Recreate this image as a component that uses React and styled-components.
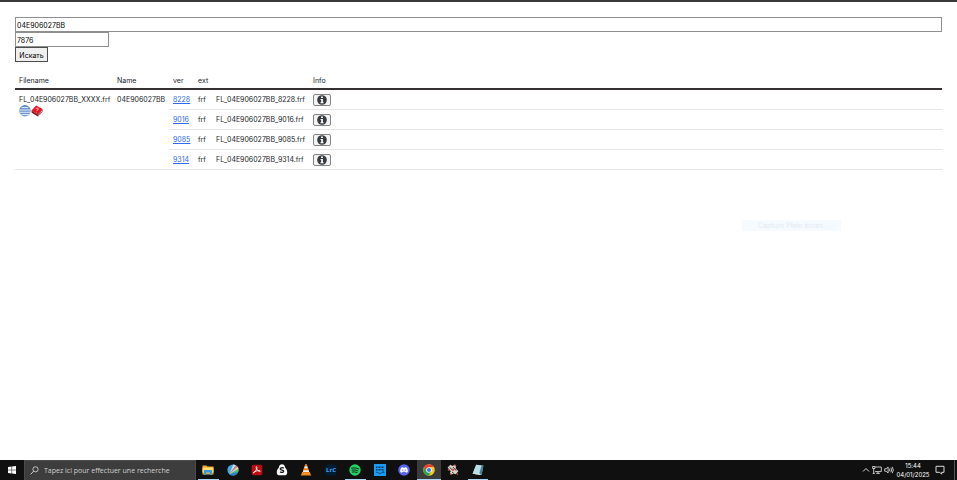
import React from 'react';
import styled, { createGlobalStyle, css } from 'styled-components';

const color = {
  ink: '#212529',
  line: '#e3e6e9',
  link: '#2f6bf0',
  bar: '#101010',
  barActive: '#3b3b3b',
  running: '#a9d6f5',
};

const font = {
  ui: "'Open Sans', 'Noto Sans', sans-serif",
  data: "Inter, 'Open Sans', sans-serif",
};

const GlobalStyle = createGlobalStyle`
  * {
    box-sizing: border-box;
  }
  body {
    margin: 0;
    background: #fff;
    color: ${color.ink};
    font-family: ${font.ui};
    font-size: 7px;
    line-height: 11px;
  }
`;

const Page = styled.div`
  position: relative;
  display: flex;
  flex-direction: column;
  min-height: 100vh;
  border-top: 2px solid #3b3838;
`;

const Content = styled.main`
  flex: 1;
  padding: 15px;
`;

const SearchForm = styled.form`
  display: flex;
  flex-direction: column;
  align-items: flex-start;
`;

const Field = styled.input`
  width: ${props => (props.$wide ? '100%' : '94px')};
  height: 15px;
  padding: 1px 1px 0;
  border: 1px solid #8f8f8f;
  border-radius: 0;
  background: #fff;
  color: #000;
  font: 7px/11px ${font.data};
  outline: none;
`;

const Submit = styled.button`
  width: 33px;
  height: 15px;
  padding: 1px 0 0;
  border: 1px solid #101010;
  outline: 1px solid #4d4d4d;
  outline-offset: -1px;
  border-radius: 0;
  background: #efefef;
  color: #000;
  font: 7px/11px ${font.data};
`;

const Table = styled.table`
  width: 100%;
  margin-top: 9px;
  border-spacing: 0;
  table-layout: fixed;
  font-family: ${font.data};
`;

const HeadCell = styled.th`
  width: ${props => props.$width || 'auto'};
  padding: 4px 4px 2px;
  border-bottom: 2px solid #353032;
  font-weight: 400;
  line-height: 11px;
  text-align: left;
`;

const Cell = styled.td`
  height: 20px;
  padding: 4px 4px 3px;
  border-bottom: 1px solid ${color.line};
  line-height: 11px;
  vertical-align: top;
  white-space: nowrap;
`;

const VersionLink = styled.a`
  color: ${color.link};
`;

const Badges = styled.div`
  display: flex;
  height: 12px;
`;

const InfoButton = styled.button`
  display: flex;
  align-items: center;
  justify-content: center;
  width: 18px;
  height: 12px;
  padding: 0;
  border: 1px solid #858585;
  border-radius: 2px;
  background: #f2f2f2;
`;

const Ghost = styled.div`
  position: absolute;
  top: 218px;
  left: 742px;
  width: 99px;
  height: 11px;
  padding-left: 16px;
  background: #f6fbff;
  color: #e4eaee;
  font-family: ${font.data};
`;

const Taskbar = styled.footer`
  display: flex;
  height: 20px;
  background: ${color.bar};
  color: #fff;
`;

const StartButton = styled.button`
  display: flex;
  align-items: center;
  justify-content: center;
  width: 24px;
  padding: 0;
  border: 0;
  background: none;
`;

const TaskSearch = styled.label`
  display: flex;
  align-items: center;
  gap: 5px;
  width: 172px;
  padding-left: 5px;
  border: 1px solid #4b4b4b;
  border-bottom: 0;
  background: #3d3d3d;
`;

const TaskInput = styled.input`
  flex: 1;
  min-width: 0;
  padding: 0;
  border: 0;
  background: none;
  color: #fff;
  font: 7px/11px ${font.ui};
  outline: none;

  &::placeholder {
    color: #d0d0d0;
    opacity: 1;
  }
`;

const Apps = styled.nav`
  display: flex;
  width: 294px;
`;

const AppButton = styled.button`
  position: relative;
  flex: 1;
  display: flex;
  align-items: center;
  justify-content: center;
  padding: 0;
  border: 0;
  background: ${props => (props.$active ? color.barActive : 'none')};

  ${props =>
    props.$running &&
    css`
      &::after {
        content: '';
        position: absolute;
        right: ${props.$active ? '0' : '2px'};
        bottom: 0;
        left: ${props.$active ? '0' : '2px'};
        height: 1px;
        background: ${color.running};
      }
    `}
`;

const Tray = styled.div`
  display: flex;
  align-items: center;
  gap: 2px;
  margin-left: auto;
`;

const TrayButton = styled.button`
  display: flex;
  padding: 0;
  border: 0;
  background: none;
`;

const Clock = styled.time`
  width: 34px;
  font-family: ${font.data};
  font-size: 6px;
  line-height: 9px;
  text-align: center;
`;

const Notifications = styled(TrayButton)`
  justify-content: center;
  width: 16px;
`;

const ShowDesktop = styled(TrayButton)`
  align-self: stretch;
  width: 3px;
  margin-left: 4px;
  border-left: 1px solid #555;
`;

const GlobeIcon = () => (
  <svg width="12" height="12" viewBox="0 0 12 12" aria-hidden="true">
    <circle cx="6" cy="5.8" r="5.7" fill="#6f98cf" />
    <path d="M2.3 2.5h7.4M.8 5h10.4M.8 7.3h10.4M2.2 9.6h7.6" stroke="#dce9f7" strokeWidth="1" />
    <path d="M1 4a5.5 5.5 0 0 1 10 0" stroke="#4a78b5" strokeWidth=".6" fill="none" />
  </svg>
);

const BookIcon = () => (
  <svg width="12" height="12" viewBox="0 0 12 12" aria-hidden="true">
    <path d="M.5 5.5 5.2.6l6.3 3.4L7 9.4z" fill="#e31622" />
    <path d="m.5 5.5 6.5 3.9 4.5-5.4v2.8L7 11.4.7 7.8z" fill="#8e1018" />
    <path d="m7.2 10.2 3.9-4.8v.9l-3.8 4.6z" fill="#eee" />
    <path d="M4.8 3.5q1.5-1 2.4 0T6 5.2l-.5.5M5 7l.4.3" stroke="#ffc4c4" strokeWidth=".9" fill="none" />
  </svg>
);

const InfoIcon = () => (
  <svg width="10" height="10" viewBox="0 0 10 10" aria-hidden="true">
    <circle cx="5" cy="5" r="4.8" fill="#343a3d" />
    <path d="M4.1 1.5h1.8v1.6H4.1zM3.6 4h2.3v3.2h.7v1.1H3.4V7.2h.8V5.1h-.6z" fill="#fff" />
  </svg>
);

const WindowsIcon = () => (
  <svg width="8" height="8" viewBox="0 0 8 8" aria-hidden="true">
    <path d="m0 1 3.6-.5v3.2H0zM4.1.4 8 0v3.7H4.1zM0 4.2h3.6v3.3L0 7zM4.1 4.2H8V8l-3.9-.5z" fill="#fff" />
  </svg>
);

const SearchIcon = () => (
  <svg width="9" height="9" viewBox="0 0 9 9" fill="none" stroke="#e2e2e2" aria-hidden="true">
    <circle cx="5.5" cy="3.3" r="2.6" strokeWidth=".8" />
    <path d="M3.6 5.2.6 8.4" strokeWidth=".9" />
  </svg>
);

const apps = [
  {
    name: 'Explorateur de fichiers',
    running: true,
    icon: (
      <>
        <path d="M.5 1.5h4l1 1h6v8H.5z" fill="#e9a820" />
        <path d="M.5 3.5h11v5H.5z" fill="#ffdc70" />
        <path d="M2 6h8v5H7.7V8.6H4.3V11H2z" fill="#359bdc" />
      </>
    ),
  },
  {
    name: 'Cartes',
    icon: (
      <>
        <circle cx="6" cy="6" r="5.6" fill="#3fa9dc" />
        <path d="M2.4 10.3 6.3.4a5.6 5.6 0 0 1 2.6.8z" fill="#bfe6ef" />
        <path d="M2.4 10.3 8.9 1.2a5.6 5.6 0 0 1 1.6 1.5z" fill="#ee6f86" />
        <path d="m2.4 10.3 8.1-7.6a5.6 5.6 0 0 1 1 2.3z" fill="#e6d9a0" />
        <path d="M2.4 10.3 11.5 5a5.6 5.6 0 0 1-.3 3z" fill="#4fbf74" />
        <path d="m2.4 10.3 8.8-2.3a5.6 5.6 0 0 1-8.8 2.3z" fill="#2f7fc4" />
      </>
    ),
  },
  {
    name: 'Acrobat',
    icon: (
      <>
        <rect x=".7" y=".7" width="10.6" height="10.6" rx="1.7" fill="#b90d12" />
        <path
          d="M5.3 2.7c1.6-.5.5 3.3-2.2 6-.9.8-1.2-.1.3-.9 2-1.1 4.7-1.6 5.7-1 .8.6-.4 1.2-1.6.4C5.6 5.8 4.8 3.5 5.3 2.7z"
          fill="none"
          stroke="#fff"
          strokeWidth=".8"
        />
      </>
    ),
  },
  {
    name: 'Steuer',
    icon: (
      <>
        <path d="M6 .3c2 0 2.8 1.3 3.1 3.1C10.6 5 11.4 6.7 11.2 9c-.2 1.6-1.1 2.3-2.7 2.3h-5C1.9 11.3 1 10.6.8 9 .6 6.7 1.4 5 2.9 3.4 3.2 1.6 4 .3 6 .3z" fill="#f6f6f6" />
        <path d="M7.8 4.3C6.4 3.2 4 3.7 4.4 5.2c.4 1.2 3.3.7 3.3 2.1 0 1.3-2.3 1.5-3.6.4" fill="none" stroke="#161616" strokeWidth="1.3" />
      </>
    ),
  },
  {
    name: 'VLC',
    icon: (
      <>
        <path d="M2.3 8h7.4l1.6 3.5H.7z" fill="#f28a16" />
        <path d="M5.2.6h1.6l2.7 8.3q-3.5 1.5-7 0z" fill="#f6f1e8" />
        <path d="M5.2.6h1.6l.6 1.8H4.6zM4 4.2h4l.7 2.1H3.3zM2.8 8h6.4l.3.9q-3.5 1.5-7 0z" fill="#f07c12" />
      </>
    ),
  },
  {
    name: 'Lightroom Classic',
    icon: (
      <>
        <rect x=".5" y=".5" width="11" height="11" rx="2" fill="#001e36" />
        <text x="6" y="8" fill="#37a9ff" fontFamily="Open Sans" fontSize="6" fontWeight="700" textAnchor="middle">
          LrC
        </text>
      </>
    ),
  },
  {
    name: 'Spotify',
    running: true,
    icon: (
      <>
        <circle cx="6" cy="6" r="5.7" fill="#23d465" />
        <path d="M2.6 4.1q3.8-1 7 .7M3 6.1q3.2-.8 5.9.7M3.4 8q2.6-.6 4.8.6" fill="none" stroke="#102a19" strokeWidth="1" strokeLinecap="round" />
      </>
    ),
  },
  {
    name: 'Prime Video',
    icon: (
      <>
        <path d="M0 0h12v12H0z" fill="#199cf2" />
        <path d="M2 3.2h8M2 5.7h8" stroke="#123d68" strokeWidth="1.4" strokeDasharray="1.1 .4" />
        <path d="M2 8q4 3 8 0M8.6 7.8H10v1.1" fill="none" stroke="#123d68" strokeWidth=".8" />
      </>
    ),
  },
  {
    name: 'Discord',
    icon: (
      <>
        <circle cx="6" cy="6" r="5.8" fill="#5865f2" />
        <path d="m4.8 3.2.4.6h1.6l.4-.6 1.6.5c.8 1.3 1.1 2.6.9 4.2l-1.6.8-.6-.9h-3l-.6.9-1.6-.8c-.2-1.6.1-2.9.9-4.2z" fill="#fff" />
        <circle cx="4.7" cy="6.1" r=".7" fill="#5865f2" />
        <circle cx="7.3" cy="6.1" r=".7" fill="#5865f2" />
      </>
    ),
  },
  {
    name: 'Chrome',
    running: true,
    active: true,
    icon: (
      <>
        <circle cx="6" cy="6" r="5.8" fill="#fbc71e" />
        <path d="M1 3.1a5.8 5.8 0 0 1 10 0H6L3.6 7.4z" fill="#e83c2e" />
        <path d="M1 3.1a5.8 5.8 0 0 0 4.6 8.7l2.7-4.4H3.5z" fill="#2da44e" />
        <circle cx="6" cy="6" r="2.8" fill="#fff" />
        <circle cx="6" cy="6" r="2.1" fill="#2f7de9" />
      </>
    ),
  },
  {
    name: 'Diagnostic',
    icon: (
      <>
        <path d="M.6 3.4 3.4.8l2 1.2L7.6.8l1.6 1.6-.6 1.8 2.8 3-2.8 3-2-.8-2 1.2L2.8 9l1-1.8z" fill="#d9cfc8" />
        <path d="M2.6 3.4 5.8 6.4M6.2 3.2l3 3.4M5 8.2l1.4.6" stroke="#3c3735" strokeWidth="1" />
        <circle cx="6.3" cy="5.6" r="1.2" fill="#d65542" />
        <path d="M7.4.8 9 2.2M.8 5.6l1.6 1M9.6 9.6l1.4 1M3.2 10.6l1-1" stroke="#d65542" strokeWidth="1.2" />
      </>
    ),
  },
  {
    name: 'Bloc-notes',
    running: true,
    icon: (
      <>
        <path d="m4.2.8 7.2.8L9.6 11 .6 9.8z" fill="#7fb9c9" />
        <path d="m4.2.8 5.2.6L7 9.2.6 9.8z" fill="#b9dfe6" />
        <path d="m9.8 1.4 1.6.2L9.6 11l-2.4-.4z" fill="#4d7f8e" />
        <path d="m.6 9.8 6.4-.6 2.6 1.8z" fill="#edf5f5" />
      </>
    ),
  },
];

const versions = ['8228', '9016', '9085', '9314'];

const FileRow = ({ version, first }) => (
  <tr>
    {first && (
      <>
        <Cell rowSpan={versions.length}>
          FL_04E906027BB_XXXX.frf
          <Badges>
            <GlobeIcon />
            <BookIcon />
          </Badges>
        </Cell>
        <Cell rowSpan={versions.length}>04E906027BB</Cell>
      </>
    )}
    <Cell>
      <VersionLink href={`#${version}`}>{version}</VersionLink>
    </Cell>
    <Cell>frf</Cell>
    <Cell>{`FL_04E906027BB_${version}.frf`}</Cell>
    <Cell>
      <InfoButton type="button" aria-label={`Info ${version}`}>
        <InfoIcon />
      </InfoButton>
    </Cell>
  </tr>
);

export default function App() {
  return (
    <Page>
      <GlobalStyle />
      <Content>
        <SearchForm onSubmit={e => e.preventDefault()}>
          <Field $wide aria-label="Name" defaultValue="04E906027BB" />
          <Field aria-label="ver" defaultValue="7876" />
          <Submit type="submit">Искать</Submit>
        </SearchForm>
        <Table>
          <thead>
            <tr>
              <HeadCell $width="98px">Filename</HeadCell>
              <HeadCell $width="56px">Name</HeadCell>
              <HeadCell $width="25px">ver</HeadCell>
              <HeadCell $width="18px">ext</HeadCell>
              <HeadCell $width="97px" />
              <HeadCell>Info</HeadCell>
            </tr>
          </thead>
          <tbody>
            {versions.map((version, i) => (
              <FileRow key={version} version={version} first={i === 0} />
            ))}
          </tbody>
        </Table>
      </Content>
      <Ghost>Capture Plein écran</Ghost>
      <Taskbar>
        <StartButton type="button" aria-label="Démarrer">
          <WindowsIcon />
        </StartButton>
        <TaskSearch>
          <SearchIcon />
          <TaskInput aria-label="Recherche" placeholder="Tapez ici pour effectuer une recherche" />
        </TaskSearch>
        <Apps>
          {apps.map(app => (
            <AppButton key={app.name} type="button" aria-label={app.name} $running={app.running} $active={app.active}>
              <svg width="12" height="12" viewBox="0 0 12 12" aria-hidden="true">
                {app.icon}
              </svg>
            </AppButton>
          ))}
        </Apps>
        <Tray>
          <TrayButton type="button" aria-label="Icônes cachées">
            <svg width="8" height="8" viewBox="0 0 8 8" fill="none" stroke="#eee" strokeWidth=".9">
              <path d="m1 5.5 3-3 3 3" />
            </svg>
          </TrayButton>
          <TrayButton type="button" aria-label="Réseau">
            <svg width="10" height="10" viewBox="0 0 10 10" fill="none" stroke="#eee" strokeWidth=".8">
              <path d="M3 2h6.3v4.6H3M6 6.6v1.7M4.3 8.4h3.5M.6 1.5h2.3v2H.6zM1.7 3.5v5M.7 8.4h2.2" />
            </svg>
          </TrayButton>
          <TrayButton type="button" aria-label="Volume">
            <svg width="10" height="10" viewBox="0 0 10 10" fill="none" stroke="#eee" strokeWidth=".8">
              <path d="M.7 3.8h1.4l2-1.8v6l-2-1.8H.7zM5.4 3.7q.9 1.3 0 2.6M6.8 2.7q1.7 2.3 0 4.6M8.2 1.8q2.3 3.2 0 6.4" />
            </svg>
          </TrayButton>
          <Clock>
            15:44
            <br />
            04/01/2025
          </Clock>
          <Notifications type="button" aria-label="Notifications">
            <svg width="10" height="10" viewBox="0 0 10 10" fill="none" stroke="#eee" strokeWidth=".9">
              <path d="M1 1.3h8v6H6.7v1.9L4.8 7.3H1z" />
            </svg>
          </Notifications>
          <ShowDesktop type="button" aria-label="Afficher le bureau" />
        </Tray>
      </Taskbar>
    </Page>
  );
}
